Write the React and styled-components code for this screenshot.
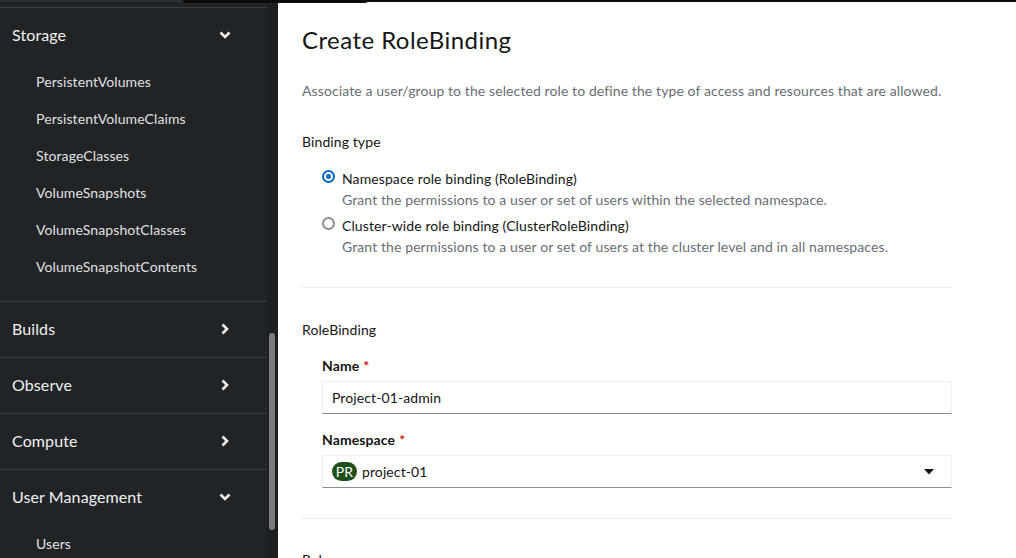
import React from "react";
import styled, { createGlobalStyle } from "styled-components";

const GlobalStyle = createGlobalStyle`
  html, body { margin: 0; padding: 0; overflow: hidden; background: #fff; }
  body { font-family: "Lato", "Noto Sans", sans-serif; letter-spacing: 0.1px; -webkit-font-smoothing: antialiased; }
  * { box-sizing: border-box; }
`;

const Page = styled.div`
  position: relative;
  display: flex;
  width: 1016px;
  height: 558px;
  overflow: hidden;
`;

const TopTab = styled.div`
  position: absolute;
  top: 0;
  left: 183px;
  width: 185px;
  height: 3px;
  background: #0b0b0c;
  border-radius: 0 0 4px 4px;
`;

const Sidebar = styled.aside`
  display: flex;
  width: 278px;
  flex-shrink: 0;
  background: #212427;
  border-top: 2px solid #2c2f32;
`;

const Nav = styled.nav`
  width: 267px;
  display: flex;
  flex-direction: column;
  padding-top: 5px;
`;

const Track = styled.div`
  width: 11px;
  background: #1d2023;
  padding: 331px 2px 0 2px;
`;

const Thumb = styled.div`
  width: 6px;
  height: 197px;
  border-radius: 3px;
  background: #7a7c7f;
`;

const Group = styled.section`
  border-top: 1px solid #3c3f42;
  padding-bottom: ${(p) => (p.$open && p.$pad ? "16px" : "0")};
`;

const GroupHead = styled.div`
  display: flex;
  align-items: center;
  justify-content: space-between;
  height: 55px;
  padding: 0 36px 2px 12px;
  color: #f0f0f0;
  font-size: 16px;
`;

const ChevronBox = styled.span`
  display: flex;
  margin-top: 1px;
`;

const SubItem = styled.div`
  height: 37px;
  display: flex;
  align-items: center;
  padding-left: 36px;
  color: #e0e0e0;
  font-size: 14px;
`;

const Chevron = ({ down }) => (
  <ChevronBox>
    <svg width="12" height="12" viewBox="0 0 12 12" aria-hidden="true">
      {down ? (
        <polyline points="1.5,3.5 6,8 10.5,3.5" fill="none" stroke="#f5f5f5" strokeWidth="2.6" strokeLinejoin="miter" />
      ) : (
        <polyline points="3.5,1.5 8,6 3.5,10.5" fill="none" stroke="#f5f5f5" strokeWidth="2.6" strokeLinejoin="miter" />
      )}
    </svg>
  </ChevronBox>
);

const Main = styled.main`
  flex: 1;
  background: #fff;
  border-top: 2px solid #0b0b0c;
  padding: 23px 64px 0 24px;
  color: #151515;
`;

const Title = styled.h1`
  margin: 0;
  font-family: "Lato", "Noto Sans", sans-serif;
  font-size: 24px;
  font-weight: 400;
  line-height: 29px;
  letter-spacing: 0.45px;
`;

const Desc = styled.p`
  margin: 26px 0 0;
  font-size: 14px;
  line-height: 21px;
  color: #6a6e73;
`;

const SectionLabel = styled.div`
  margin-top: ${(p) => p.$mt || 0}px;
  font-size: 14px;
  line-height: 21px;
  color: #151515;
`;

const RadioGroup = styled.div`
  display: flex;
  flex-direction: column;
  gap: 5px;
  margin-top: 16px;
  padding-left: 20px;
`;

const RadioRow = styled.div`
  display: grid;
  grid-template-columns: 13px 1fr;
  column-gap: 7px;
`;

const RadioDot = styled.span`
  width: 13px;
  height: 13px;
  margin-top: 2px;
  border-radius: 50%;
  border: ${(p) => (p.$checked ? "2px solid #0066cc" : "2px solid #8a8d90")};
  display: flex;
  align-items: center;
  justify-content: center;
  &::after {
    content: "";
    width: 5px;
    height: 5px;
    border-radius: 50%;
    background: ${(p) => (p.$checked ? "#0066cc" : "transparent")};
  }
`;

const RadioLabel = styled.div`
  font-size: 14px;
  line-height: 21px;
  color: #151515;
`;

const RadioHelp = styled.div`
  grid-column: 2;
  font-size: 14px;
  line-height: 21px;
  color: #6a6e73;
`;

const Divider = styled.hr`
  margin: ${(p) => p.$mt}px 0 0;
  border: 0;
  border-top: 1px solid #ededed;
  width: 650px;
`;

const Fields = styled.div`
  padding-left: 20px;
  width: 650px;
`;

const FieldLabel = styled.label`
  display: block;
  margin-top: ${(p) => p.$mt}px;
  font-size: 14px;
  line-height: 21px;
  font-weight: 700;
  color: #151515;
`;

const Req = styled.span`
  color: #c9190b;
  margin-left: 4px;
`;

const TextInput = styled.div`
  margin-top: 5px;
  height: 33px;
  display: flex;
  align-items: center;
  padding: 0 9px;
  border: 1px solid #f0f0f0;
  border-bottom-color: #8a8d90;
  font-size: 14px;
  color: #151515;
`;

const Select = styled(TextInput)`
  padding: 0 17px 0 9px;
  justify-content: space-between;
`;

const NsValue = styled.div`
  display: flex;
  align-items: center;
  gap: 5px;
`;

const Badge = styled.span`
  display: inline-flex;
  align-items: center;
  justify-content: center;
  width: 25px;
  height: 19px;
  border-radius: 10px;
  background: #1e4f18;
  color: #fff;
  font-size: 14px;
`;

const Caret = () => (
  <svg width="10" height="6" viewBox="0 0 10 6" aria-hidden="true">
    <polygon points="0,0 10,0 5,5.5" fill="#151515" />
  </svg>
);

const storageItems = [
  "PersistentVolumes",
  "PersistentVolumeClaims",
  "StorageClasses",
  "VolumeSnapshots",
  "VolumeSnapshotClasses",
  "VolumeSnapshotContents",
];

export default function App() {
  return (
    <>
      <GlobalStyle />
      <Page>
        <Sidebar>
          <Nav>
            <Group $open $pad>
              <GroupHead>
                Storage <Chevron down />
              </GroupHead>
              {storageItems.map((s) => (
                <SubItem key={s}>{s}</SubItem>
              ))}
            </Group>
            <Group>
              <GroupHead>
                Builds <Chevron />
              </GroupHead>
            </Group>
            <Group>
              <GroupHead>
                Observe <Chevron />
              </GroupHead>
            </Group>
            <Group>
              <GroupHead>
                Compute <Chevron />
              </GroupHead>
            </Group>
            <Group $open>
              <GroupHead>
                User Management <Chevron down />
              </GroupHead>
              <SubItem>Users</SubItem>
            </Group>
          </Nav>
          <Track>
            <Thumb />
          </Track>
        </Sidebar>
        <Main>
          <Title>Create RoleBinding</Title>
          <Desc>
            Associate a user/group to the selected role to define the type of access and resources that are allowed.
          </Desc>
          <SectionLabel $mt={30}>Binding type</SectionLabel>
          <RadioGroup>
            <RadioRow>
              <RadioDot $checked />
              <RadioLabel>Namespace role binding (RoleBinding)</RadioLabel>
              <RadioHelp>Grant the permissions to a user or set of users within the selected namespace.</RadioHelp>
            </RadioRow>
            <RadioRow>
              <RadioDot />
              <RadioLabel>Cluster-wide role binding (ClusterRoleBinding)</RadioLabel>
              <RadioHelp>Grant the permissions to a user or set of users at the cluster level and in all namespaces.</RadioHelp>
            </RadioRow>
          </RadioGroup>
          <Divider $mt={30} />
          <SectionLabel $mt={31}>RoleBinding</SectionLabel>
          <Fields>
            <FieldLabel $mt={15}>
              Name<Req>*</Req>
            </FieldLabel>
            <TextInput>Project-01-admin</TextInput>
            <FieldLabel $mt={15}>
              Namespace<Req>*</Req>
            </FieldLabel>
            <Select>
              <NsValue>
                <Badge>PR</Badge>project-01
              </NsValue>
              <Caret />
            </Select>
          </Fields>
          <Divider $mt={30} />
          <SectionLabel $mt={30}>Role</SectionLabel>
        </Main>
        <TopTab />
      </Page>
    </>
  );
}
